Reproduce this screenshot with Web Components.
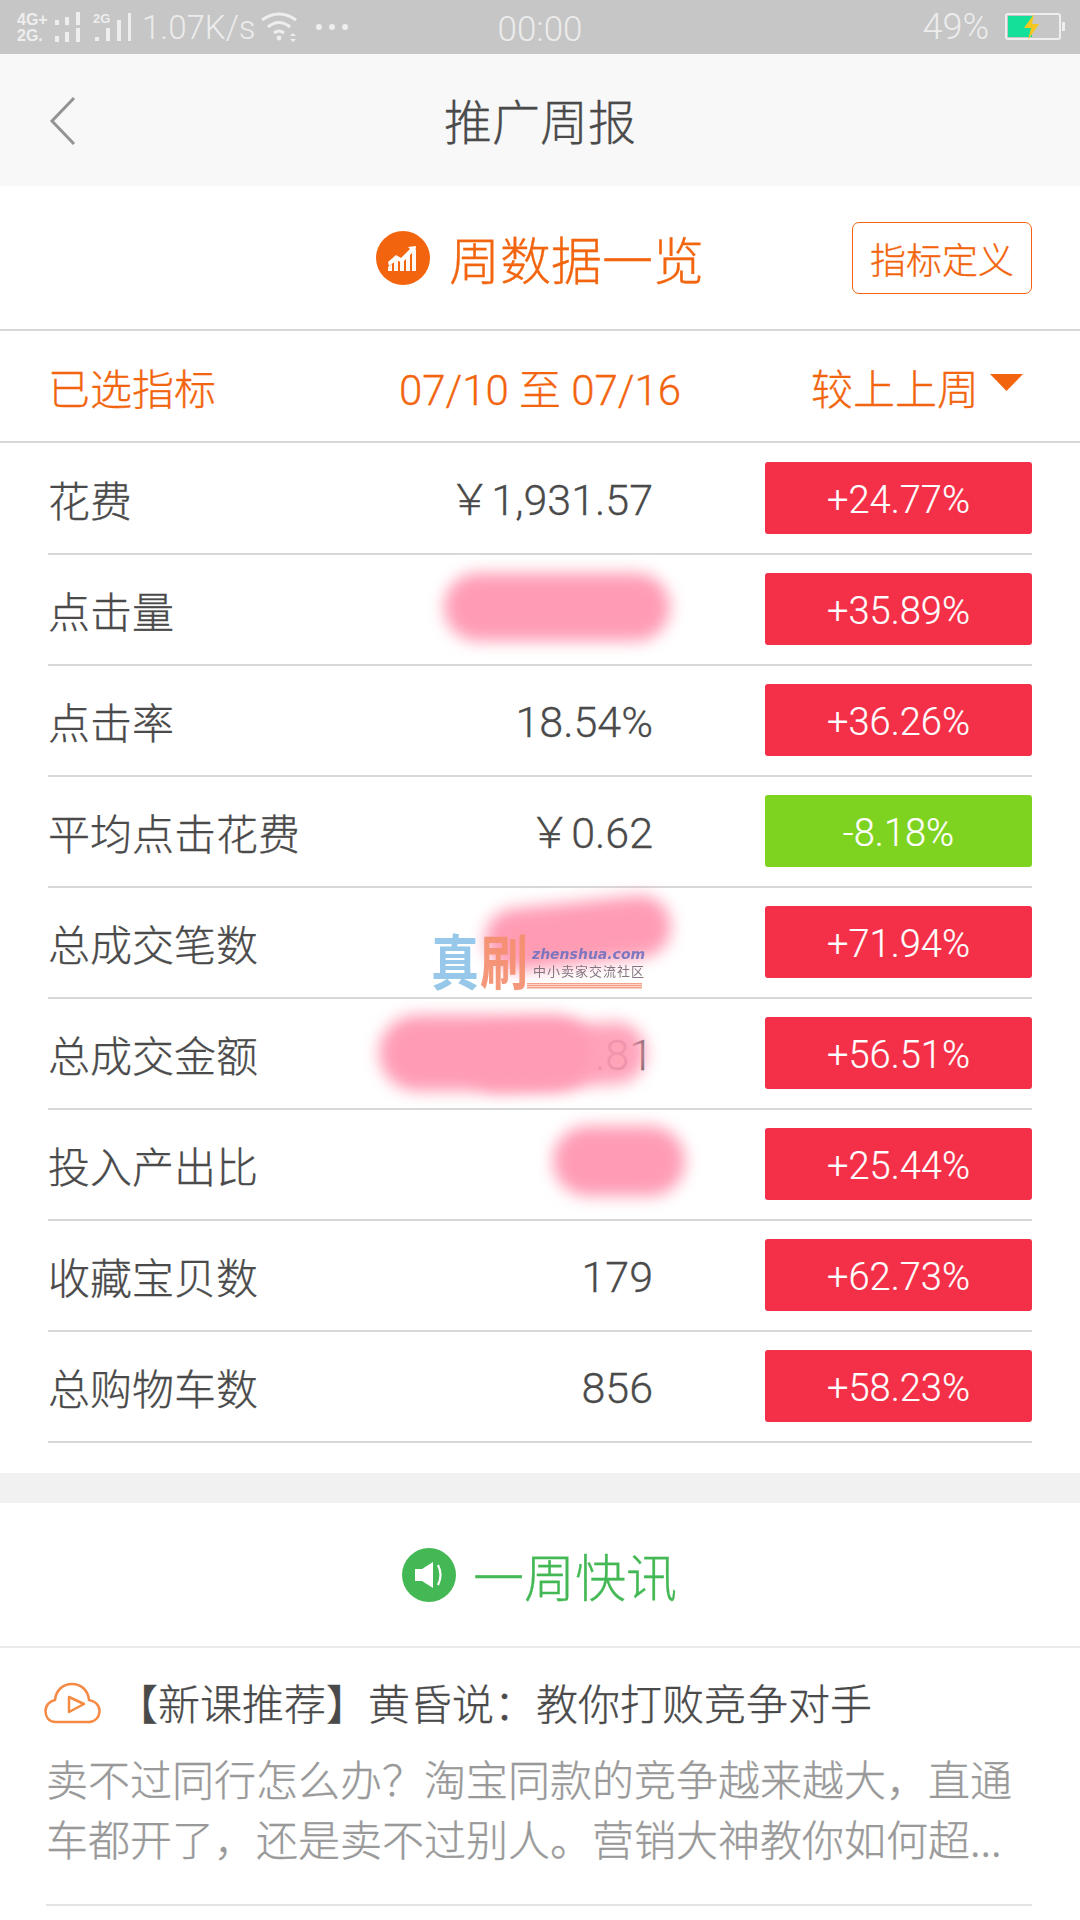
<!DOCTYPE html>
<html lang="zh-CN"><head><meta charset="utf-8"><title>推广周报</title>
<style>
html,body{margin:0;padding:0;background:#fff}
body{width:1080px;height:1920px;overflow:hidden;font-family:"Noto Sans CJK SC",sans-serif;font-weight:300;-webkit-text-stroke:.3px;color:#4a4a4a}
</style></head><body>
<report-page>
  <status-bar></status-bar>
  <nav-bar>推广周报</nav-bar>
  <section-head color="#f2650e" action="指标定义" height="143" kind="chart">周数据一览</section-head>
  <period-row></period-row>
  <metric-list>
    <metric-row label="花费" value="￥1,931.57" change="+24.77%"></metric-row>
    <metric-row label="点击量" change="+35.89%" blob="b1"></metric-row>
    <metric-row label="点击率" value="18.54%" change="+36.26%"></metric-row>
    <metric-row label="平均点击花费" value="￥0.62" change="-8.18%" down></metric-row>
    <metric-row label="总成交笔数" change="+71.94%" blob="b2"></metric-row>
    <metric-row label="总成交金额" value=".81" change="+56.51%" blob="b3"></metric-row>
    <metric-row label="投入产出比" change="+25.44%" blob="b4"></metric-row>
    <metric-row label="收藏宝贝数" value="179" change="+62.73%"></metric-row>
    <metric-row label="总购物车数" value="856" change="+58.23%"></metric-row>
  </metric-list>
  <section-gap></section-gap>
  <section-head color="#43b854" height="143" kind="speaker" light>一周快讯</section-head>
  <news-item title="【新课推荐】黄昏说：教你打败竞争对手">卖不过同行怎么办？淘宝同款的竞争越来越大，直通<br>车都开了，还是卖不过别人。营销大神教你如何超...</news-item>
  <site-mark></site-mark>
</report-page>
<script>
const num='Roboto,"Noto Sans CJK SC",sans-serif';
function def(name,html){
  customElements.define(name,class extends HTMLElement{
    connectedCallback(){
      if(this.shadowRoot)return;
      const r=this.attachShadow({mode:'open'});
      r.innerHTML=typeof html==='function'?html(this):html;
    }
  });
}
def('report-page',`<style>:host{display:block;position:relative;width:1080px;height:1920px}</style><slot></slot>`);
def('status-bar',`<style>
:host{display:flex;align-items:center;height:54px;background:#c6c6c6;color:#ececec;font-family:${num};position:relative;-webkit-text-stroke:0}
.l{display:flex;align-items:center;margin-left:17px}
.net{display:flex;flex-direction:column;font:700 16px/16px "Liberation Sans",sans-serif;color:#eee;width:35px;margin-top:1px;white-space:nowrap}
svg{display:block;flex:none}
.sp{font-weight:300;font-size:33px;line-height:54px;margin:2px 0 0 9px}
.c{position:absolute;left:0;right:0;top:0;text-align:center;font-weight:300;font-size:35px;line-height:60px}
.r{margin-left:auto;display:flex;align-items:center;margin-right:15px;font-weight:300;font-size:36px;line-height:54px}
.r svg{margin-left:16px}
</style>
<div class="l">
  <div class="net"><span>4G+</span><span>2G.</span></div>
  <svg width="30" height="54" viewBox="0 0 30 54" fill="#eee"><rect x="3" y="20" width="4" height="5"/><rect x="13" y="17" width="4" height="8"/><rect x="24" y="12" width="4" height="13"/><rect x="3" y="36" width="4" height="6"/><rect x="13" y="32" width="4" height="10"/><rect x="24" y="28" width="4" height="14"/></svg>
  <svg width="40" height="54" viewBox="0 0 40 54" style="margin-left:11px" fill="#eee"><text x="0" y="23" font-family="Liberation Sans" font-weight="700" font-size="13">2G</text><rect x="2" y="37" width="4" height="4"/><rect x="13" y="28" width="4" height="13"/><rect x="24" y="20" width="4" height="21"/><rect x="35" y="13" width="3" height="28"/></svg>
  <span class="sp">1.07K/s</span>
  <svg width="38" height="54" viewBox="0 0 38 54" style="margin-left:4px" fill="none" stroke="#eee" stroke-width="3"><path d="M2 20Q19 8 36 20"/><path d="M8 27Q19 18 30 27"/><path d="M14 33Q19 29 24 33"/><circle cx="19" cy="38" r="2.4" fill="#eee" stroke="none"/><path d="M30 36l3-3 3 3zM30 39l3 3 3-3z" fill="#eee" stroke="none"/></svg>
  <svg width="34" height="8" viewBox="0 0 34 8" style="margin-left:17px" fill="#eee"><circle cx="4" cy="4" r="3"/><circle cx="17" cy="4" r="3"/><circle cx="30" cy="4" r="3"/></svg>
</div>
<div class="c">00:00</div>
<div class="r">49%
  <svg width="60" height="28" viewBox="0 0 60 28"><rect x="1" y="1" width="54" height="25" rx="2" fill="none" stroke="#eee" stroke-width="2"/><rect x="3" y="3" width="24" height="21" fill="#14e09a"/><rect x="57" y="9" width="3" height="9" fill="#eee"/><path d="M29 1L19 15h7l-3 12 11-16h-7l2-10z" fill="#f4c820"/></svg>
</div>`);
def('nav-bar',`<style>
:host{display:flex;align-items:center;justify-content:center;height:132px;background:#f8f8f8;position:relative;font-size:48px;color:#4a4a4a}
span{margin-top:-3px}
svg{position:absolute;left:49px;top:42px}
</style><svg width="28" height="50" viewBox="0 0 28 50" fill="none" stroke="#939393" stroke-width="3"><path d="M25 2L3 25l22 23"/></svg><span><slot></slot></span>`);
const ICONS={
 chart:`<circle cx="27" cy="27" r="27" fill="currentColor"/><g fill="#fff"><path d="M12 40v-4l4-3v7zM18 40v-9l4-3v12zM24 40V30l4-2v12zM30 40V26l4-4v18zM36 40V22l4-4v22z" opacity=".95"/><path d="M12 31l8-7 5 3 9-9-2-2 8-1-1 8-2-2-11 11-5-3-8 6z"/></g>`,
 speaker:`<circle cx="27" cy="27" r="27" fill="currentColor"/><path d="M13 21h7l11-7v26l-11-7h-7z" fill="#fff"/><path d="M36 17q5 10 0 20" fill="none" stroke="#fff" stroke-width="2.2"/>`
};
def('section-head',h=>`<style>
:host{display:grid;grid-template-columns:1fr auto 1fr;align-items:center;height:${h.getAttribute('height')}px;border-bottom:2px solid ${h.hasAttribute('light')?'#ebebeb':'#d8d8d8'};color:${h.getAttribute('color')};font-size:51px;background:#fff}
.m{grid-column:2;display:flex;align-items:center;gap:${h.hasAttribute('light')?17:19}px;line-height:60px;${h.hasAttribute('light')?'margin-left:-1px':''}}
svg{display:block}
button{grid-column:3;justify-self:end;margin-right:48px;width:180px;height:72px;padding:0;border:1px solid currentColor;border-radius:7px;background:#fff;color:inherit;font:300 36px "Noto Sans CJK SC",sans-serif;-webkit-text-stroke:.3px}
</style><div class="m"><svg width="54" height="54" viewBox="0 0 54 54">${ICONS[h.getAttribute('kind')]}</svg><span><slot></slot></span></div>${h.getAttribute('action')?`<button>${h.getAttribute('action')}</button>`:''}`);
def('period-row',`<style>
:host{display:grid;grid-template-columns:1fr auto 1fr;align-items:center;height:110px;border-bottom:2px solid #d8d8d8;color:#f2650e;font-size:42px;padding:0 48px}
.d{font-family:${num};font-size:42px;font-weight:300}
.c{justify-self:end;display:flex;align-items:center;gap:11px;margin-right:9px}
svg{display:block;margin-top:-8px}
</style><div>已选指标</div><div class="d">07/10 至 07/16</div><div class="c">较上上周<svg width="33" height="17" viewBox="0 0 33 17"><path d="M0 0h33L16.500 17z" fill="#f2650e"/></svg></div>`);
def('metric-list',`<style>:host{display:block;padding:1px 48px 30px;background:#fff;position:relative}</style><slot></slot>`);
const BL={
 b1:[`left:396px;top:18px;width:226px;height:68px;border-radius:34px`],
 b2:[`left:437px;top:14px;width:186px;height:62px;border-radius:30px;transform:rotate(-6deg)`],
 b3:[`left:331px;top:16px;width:214px;height:76px;border-radius:38px`,`left:420px;top:26px;width:178px;height:62px;border-radius:30px;transform:rotate(-3deg);opacity:.92`],
 b4:[`left:505px;top:16px;width:132px;height:70px;border-radius:35px`]
};
def('metric-row',h=>`<style>
:host{display:grid;grid-template-columns:1fr 112px 267px;align-items:center;height:109px;border-bottom:2px solid #d8d8d8;position:relative;font-size:42px;color:#4a4a4a}
.v{text-align:right;font-family:${num};font-weight:300;font-size:43px;line-height:50px;justify-self:end;grid-column:1;grid-row:1;margin-top:3px}
.l{grid-column:1;grid-row:1}
.b{grid-column:3;height:72px;margin-top:-2px;border-radius:3px;background:${h.hasAttribute('down')?'#7ed321':'#f42f48'};color:#fff;display:flex;align-items:center;justify-content:center;font-family:${num};font-weight:300;font-size:38px;line-height:72px;-webkit-text-stroke:.2px}
.b span{margin-top:4px}
.blob{position:absolute;background:#ff9cb4;filter:blur(8px);pointer-events:none}
</style><div class="l">${h.getAttribute('label')}</div><div class="v">${h.getAttribute('value')||'&nbsp;'}</div><div class="b"><span>${h.getAttribute('change')}</span></div>${(BL[h.getAttribute('blob')]||[]).map(s=>`<div class="blob" style="${s}"></div>`).join('')}`);
def('section-gap',`<style>:host{display:block;height:30px;background:#f1f1f1;border-top:1px solid #e5e5e5;margin-top:-1px}</style>`);
def('news-item',h=>`<style>
:host{display:block;box-sizing:border-box;margin:0 48px 0 46px;padding-top:24px;height:258px;border-bottom:2px solid #e4e4e4;background:#fff}
.t{display:flex;align-items:center;gap:14px;font-size:42px;line-height:60px;color:#4a4a4a;margin-bottom:16px;margin-left:-2px;white-space:nowrap}
svg{display:block;flex:none;margin-top:2px}
.p{font-size:42px;line-height:60px;color:#999;white-space:nowrap}
</style><div class="t"><svg width="58" height="42" viewBox="0 0 58 42" fill="none" stroke="#f58a44" stroke-width="2.500"><path d="M12 40C4 40 1.500 34 1.500 29C1.500 23 6 19 11 18C12 8 19 2 28 2C37 2 44 8 45 18C51 19 55.500 23 55.500 29C55.500 35 51 40 45 40Z"/><path d="M25 15l15 7-15 8z" stroke-linejoin="round"/></svg><span>${h.getAttribute('title')}</span></div><div class="p"><slot></slot></div>`);
def('site-mark',`<style>
:host{position:absolute;left:431px;top:925px;width:220px;height:67px;opacity:.92;display:block;-webkit-text-stroke:0}
.w{display:flex;align-items:flex-start}
.a{display:block;width:48px;font:700 48px/54px "Noto Sans CJK SC",sans-serif;color:#8fc4e8;transform:scaleY(1.25);transform-origin:top}
.b{color:#f58f6f;margin-left:1px}
.x{position:absolute;left:101px;top:23px;width:114px;color:#7373c0;font:italic 700 14px/12px "DejaVu Sans",sans-serif;white-space:nowrap}
.y{position:absolute;left:102px;top:38px;width:112px;font:400 13px/15px "Noto Sans CJK SC",sans-serif;letter-spacing:1px;color:#7a6a78;white-space:nowrap}
.u{position:absolute;left:96px;top:58px;width:115px;height:6px;background:repeating-linear-gradient(#f59a80 0 1px,#fbd0c0 1px 2px)}
</style><div class="w"><span class="a">真</span><span class="a b">刷</span></div><div class="x">zhenshua.com</div><div class="y">中小卖家交流社区</div><div class="u"></div>`);
</script>
</body></html>
